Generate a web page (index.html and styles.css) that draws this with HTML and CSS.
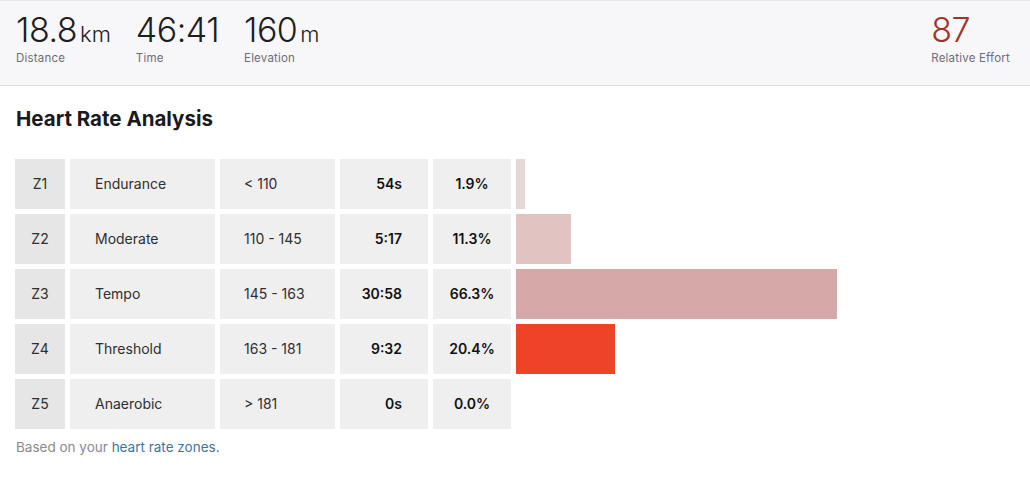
FILE: index.html
```html
<!DOCTYPE html>
<html>
<head>
<meta charset="utf-8">
<link rel="stylesheet" href="styles.css">
</head>
<body>
<header class="stats">
  <div class="stat-group">
    <div class="stat">
      <div class="stat-value">18.8<span class="unit">km</span></div>
      <div class="stat-label">Distance</div>
    </div>
    <div class="stat">
      <div class="stat-value">46:41</div>
      <div class="stat-label">Time</div>
    </div>
    <div class="stat">
      <div class="stat-value">160<span class="unit">m</span></div>
      <div class="stat-label">Elevation</div>
    </div>
  </div>
  <div class="stat">
    <div class="stat-value effort">87</div>
    <div class="stat-label">Relative Effort</div>
  </div>
</header>
<main class="analysis">
  <h2 class="title">Heart Rate Analysis</h2>
  <div class="zones">
    <div class="cell zone">Z1</div><div class="cell name">Endurance</div><div class="cell range">&lt; 110</div><div class="cell time">54s</div><div class="cell pct">1.9%</div><div class="bar-cell"><div class="bar z1" style="width:1.9%"></div></div>
    <div class="cell zone">Z2</div><div class="cell name">Moderate</div><div class="cell range">110 - 145</div><div class="cell time">5:17</div><div class="cell pct">11.3%</div><div class="bar-cell"><div class="bar z2" style="width:11.3%"></div></div>
    <div class="cell zone">Z3</div><div class="cell name">Tempo</div><div class="cell range">145 - 163</div><div class="cell time">30:58</div><div class="cell pct">66.3%</div><div class="bar-cell"><div class="bar z3" style="width:66.3%"></div></div>
    <div class="cell zone">Z4</div><div class="cell name">Threshold</div><div class="cell range">163 - 181</div><div class="cell time">9:32</div><div class="cell pct">20.4%</div><div class="bar-cell"><div class="bar z4" style="width:20.4%"></div></div>
    <div class="cell zone">Z5</div><div class="cell name">Anaerobic</div><div class="cell range">&gt; 181</div><div class="cell time">0s</div><div class="cell pct">0.0%</div><div class="bar-cell"><div class="bar z5" style="width:0%"></div></div>
  </div>
  <p class="note">Based on your <a href="#">heart rate zones.</a></p>
</main>
</body>
</html>
```

FILE: styles.css
```css
* { box-sizing: border-box; }
html, body { margin: 0; padding: 0; background: #fff; }
body {
  font-family: Inter, "Liberation Sans", Arial, sans-serif;
  color: #242428;
  width: 1030px;
}
.stats {
  height: 86px;
  background: #f7f7fa;
  border-top: 1px solid #e8e8ee;
  border-bottom: 1px solid #dcdce2;
  display: flex;
  justify-content: space-between;
  padding: 10px 20px 0 16px;
}
.stat-group { display: flex; gap: 25px; }
.stat-value {
  font-size: 34px;
  font-weight: 300;
  height: 38px;
  line-height: 38px;
  letter-spacing: -0.5px;
  color: #1d1d22;
  white-space: nowrap;
}
.unit {
  font-size: 22px;
  line-height: 1;
  margin-left: 3px;
  letter-spacing: 0;
}
.effort { color: #a23427; }
.stat-label {
  font-size: 11.5px;
  letter-spacing: 0.2px;
  color: #6d6d78;
  margin-top: 2px;
}
.analysis { padding: 0 15px; }
.title {
  font-size: 20.5px;
  font-weight: 700;
  margin: 0;
  padding: 21px 1px 0;
  line-height: 24px;
  color: #1a1a1e;
}
.zones {
  margin-top: 28px;
  display: grid;
  grid-template-columns: 50px 145px 115px 88px 78px 484px;
  grid-auto-rows: 50px;
  column-gap: 5px;
  row-gap: 5px;
  font-size: 14px;
}
.cell {
  background: #efefef;
  display: flex;
  align-items: center;
  color: #2e2e32;
  padding-bottom: 2px;
}
.zone { background: #e6e6e6; justify-content: center; }
.name { padding-left: 25px; }
.range { padding-left: 24px; }
.time { justify-content: flex-end; padding-right: 26px; font-weight: 600; color: #111; }
.pct { justify-content: center; font-weight: 600; color: #111; }
.bar-cell { display: flex; }
.bar { height: 100%; }
.z1 { background: #e6d6d6; }
.z2 { background: #e1c3c1; }
.z3 { background: #d4a9a8; }
.z4 { background: #ee4329; }
.note {
  margin: 10px 0 0 1px;
  font-size: 13.5px;
  color: #8a8a92;
}
.note a { color: #3a75a6; text-decoration: none; }
```
